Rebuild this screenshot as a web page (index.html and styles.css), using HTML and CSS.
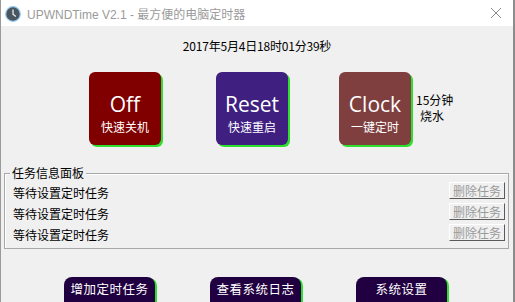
FILE: index.html
```html
<!DOCTYPE html>
<html>
<head>
<meta charset="utf-8">
<link rel="stylesheet" href="styles.css">
</head>
<body>
<div class="win">
  <div class="titlebar">
    <svg class="appicon" width="16" height="16" viewBox="0 0 16 16">
      <circle cx="8" cy="8" r="7.3" fill="#4a5560" stroke="#8fc8ee" stroke-width="1.2"/>
      <path d="M8 3.5 V8.3 L10.8 10.6" fill="none" stroke="#e8eef2" stroke-width="1.3"/>
    </svg>
    <span class="title">UPWNDTime V2.1 - 最方便的电脑定时器</span>
    <svg class="close" width="12" height="12" viewBox="0 0 12 12">
      <path d="M1 1 L11 11 M11 1 L1 11" stroke="#8a8a8a" stroke-width="1"/>
    </svg>
  </div>
  <div class="content">
    <div class="date">2017年5月4日18时01分39秒</div>
    <div class="bigrow">
      <div class="big off"><span class="bt">Off</span><span class="bs">快速关机</span></div>
      <div class="big reset"><span class="bt">Reset</span><span class="bs">快速重启</span></div>
      <div class="clockwrap">
        <div class="big clock"><span class="bt">Clock</span><span class="bs">一键定时</span></div>
        <div class="note"><span>15分钟</span><span class="n2">烧水</span></div>
      </div>
    </div>
    <div class="group">
      <div class="legend">任务信息面板</div>
      <div class="row"><span>等待设置定时任务</span><span class="del">删除任务</span></div>
      <div class="row"><span>等待设置定时任务</span><span class="del">删除任务</span></div>
      <div class="row"><span>等待设置定时任务</span><span class="del">删除任务</span></div>
    </div>
    <div class="bottomrow">
      <div class="small">增加定时任务</div>
      <div class="small">查看系统日志</div>
      <div class="small">系统设置</div>
    </div>
  </div>
</div>
</body>
</html>
```
FILE: styles.css
```css
html, body {
  margin: 0;
  padding: 0;
  width: 515px;
  height: 302px;
  overflow: hidden;
  background: #f0f0f0;
  font-family: "Noto Sans CJK SC", "Liberation Sans", sans-serif;
}
.win {
  width: 515px;
  height: 302px;
  box-sizing: border-box;
  border-left: 1px solid #9a9a9a;
  border-right: 2px solid #8c8c8c;
  display: flex;
  flex-direction: column;
  overflow: hidden;
}
.titlebar {
  height: 26px;
  background: #fff;
  display: flex;
  align-items: center;
  flex-shrink: 0;
}
.appicon {
  margin-left: 4px;
  margin-top: 1px;
}
.title {
  margin-left: 6px;
  font-size: 12px;
  color: #9a9a9a;
  font-family: "Liberation Sans", "Noto Sans CJK SC", sans-serif;
}
.close {
  margin-left: auto;
  margin-right: 11px;
}
.content {
  flex: 1;
  background: #f0f0f0;
  display: flex;
  flex-direction: column;
}
.date {
  text-align: center;
  font-size: 12px;
  line-height: 14px;
  margin-top: 13px;
  color: #000;
  letter-spacing: -0.2px;
}
.bigrow {
  display: flex;
  margin-top: 19px;
  padding-left: 88px;
  height: 75px;
}
.big {
  width: 72px;
  height: 73px;
  border-radius: 6px;
  box-shadow: 2px 2px 0 #2ee02e;
  color: #fff;
  display: flex;
  flex-direction: column;
  align-items: center;
  flex-shrink: 0;
}
.off { background: #800000; }
.reset { background: #3f1f7f; margin-left: 55px; }
.clock { background: #7f3f3f; }
.clockwrap {
  display: flex;
  margin-left: 51px;
}
.bt {
  font-family: "Open Sans", "Liberation Sans", sans-serif;
  font-size: 21px;
  line-height: 26px;
  margin-top: 19px;
}
.bs {
  font-size: 12px;
  line-height: 14px;
  margin-top: 3px;
}
.note {
  display: flex;
  flex-direction: column;
  font-size: 12px;
  line-height: 16px;
  margin-left: 5px;
  margin-top: 20px;
  color: #000;
}
.n2 {
  padding-left: 4px;
}
.group {
  margin: 26px 4px 0 3px;
  border: 1px solid #a8a8a8;
  position: relative;
  height: 76px;
  padding-top: 10px;
  box-sizing: border-box;
  display: flex;
  flex-direction: column;
  gap: 3px;
  box-shadow: inset 1px 1px 0 #fff;
}
.legend {
  position: absolute;
  top: -8px;
  left: 5px;
  padding: 0 2px 0 2px;
  background: #f0f0f0;
  font-size: 12px;
  line-height: 14px;
}
.row {
  display: flex;
  justify-content: space-between;
  align-items: flex-start;
  height: 18px;
  padding-left: 8px;
  padding-right: 3px;
  font-size: 12px;
  line-height: 18px;
}
.del {
  width: 56px;
  height: 17px;
  margin-top: -2px;
  box-sizing: border-box;
  background: #f0f0f0;
  border: 1px solid;
  border-color: #fff #5a5a5a #5a5a5a #fff;
  color: #9a9a9a;
  font-size: 12px;
  line-height: 15px;
  text-align: center;
}
.bottomrow {
  display: flex;
  margin-top: 28px;
  padding-left: 63px;
  gap: 55px;
}
.small {
  width: 91px;
  height: 40px;
  background: #200040;
  border-radius: 8px;
  box-shadow: 2px 1px 0 #2ee02e;
  color: #fff;
  font-size: 12.5px;
  letter-spacing: 0.5px;
  text-align: center;
  padding-top: 3px;
  box-sizing: border-box;
  line-height: 18px;
}
```
